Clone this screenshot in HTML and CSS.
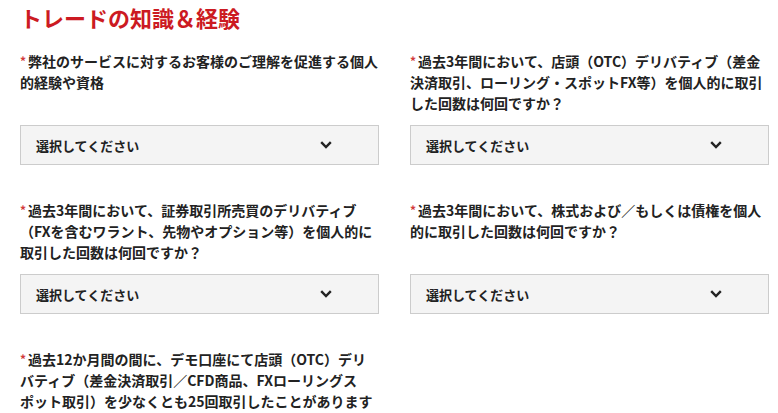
FILE: index.html
```html
<!DOCTYPE html>
<html lang="ja">
<head>
<meta charset="utf-8">
<title>トレードの知識＆経験</title>
<link rel="stylesheet" href="styles.css">
</head>
<body>
<main class="page">
  <h1 class="title">トレードの知識＆経験</h1>
  <div class="grid">
    <div class="field">
      <p class="label"><span class="req">*</span>弊社のサービスに対するお客様のご理解を促進する個人的経験や資格</p>
      <div class="select"><span>選択してください</span><svg class="chev" width="12" height="8" viewBox="0 0 12 8"><polyline points="1.2,1.2 6,6 10.8,1.2" fill="none" stroke="#222" stroke-width="2.4"/></svg></div>
    </div>
    <div class="field">
      <p class="label"><span class="req">*</span>過去3年間において、店頭（OTC）デリバティブ（差金決済取引、ローリング・スポットFX等）を個人的に取引した回数は何回ですか？</p>
      <div class="select"><span>選択してください</span><svg class="chev" width="12" height="8" viewBox="0 0 12 8"><polyline points="1.2,1.2 6,6 10.8,1.2" fill="none" stroke="#222" stroke-width="2.4"/></svg></div>
    </div>
    <div class="field">
      <p class="label"><span class="req">*</span>過去3年間において、証券取引所売買のデリバティブ（FXを含むワラント、先物やオプション等）を個人的に取引した回数は何回ですか？</p>
      <div class="select"><span>選択してください</span><svg class="chev" width="12" height="8" viewBox="0 0 12 8"><polyline points="1.2,1.2 6,6 10.8,1.2" fill="none" stroke="#222" stroke-width="2.4"/></svg></div>
    </div>
    <div class="field">
      <p class="label"><span class="req">*</span>過去3年間において、株式および／もしくは債権を個人的に取引した回数は何回ですか？</p>
      <div class="select"><span>選択してください</span><svg class="chev" width="12" height="8" viewBox="0 0 12 8"><polyline points="1.2,1.2 6,6 10.8,1.2" fill="none" stroke="#222" stroke-width="2.4"/></svg></div>
    </div>
    <div class="field">
      <p class="label"><span class="req">*</span>過去12か月間の間に、デモ口座にて店頭（OTC）デリバティブ（差金決済取引／CFD商品、FXローリングスポット取引）を少なくとも25回取引したことがありますか？</p>
      <div class="select"><span>選択してください</span><svg class="chev" width="12" height="8" viewBox="0 0 12 8"><polyline points="1.2,1.2 6,6 10.8,1.2" fill="none" stroke="#222" stroke-width="2.4"/></svg></div>
    </div>
  </div>
</main>
</body>
</html>
```

FILE: styles.css
```css
html, body {
  margin: 0;
  padding: 0;
  background: #ffffff;
  overflow: hidden;
}

body {
  font-family: "Noto Sans CJK JP", "Noto Sans", sans-serif;
  color: #222222;
}

.page {
  padding: 0 0 0 20px;
}

.title {
  margin: 2px 0 0 0;
  font-size: 22px;
  line-height: 30px;
  font-weight: 700;
  color: #cc1a22;
}

.grid {
  margin-top: 18px;
  display: grid;
  grid-template-columns: 359px 359px;
  column-gap: 31px;
  row-gap: 34px;
}

.field {
  display: flex;
  flex-direction: column;
}

.label {
  flex: 1;
  margin: 0 0 11px 0;
  font-size: 14px;
  line-height: 21px;
  font-weight: 700;
  line-break: strict;
}

.req {
  color: #d23a3a;
  font-size: 12px;
  font-weight: 700;
  margin-right: 2px;
  vertical-align: 1px;
}

.select {
  box-sizing: border-box;
  height: 40px;
  border: 1px solid #cccccc;
  background: #f4f4f4;
  display: flex;
  align-items: center;
  justify-content: space-between;
  padding: 0 46px 0 15px;
  font-size: 13px;
  font-weight: 700;
}

.chev {
  display: block;
}
```
